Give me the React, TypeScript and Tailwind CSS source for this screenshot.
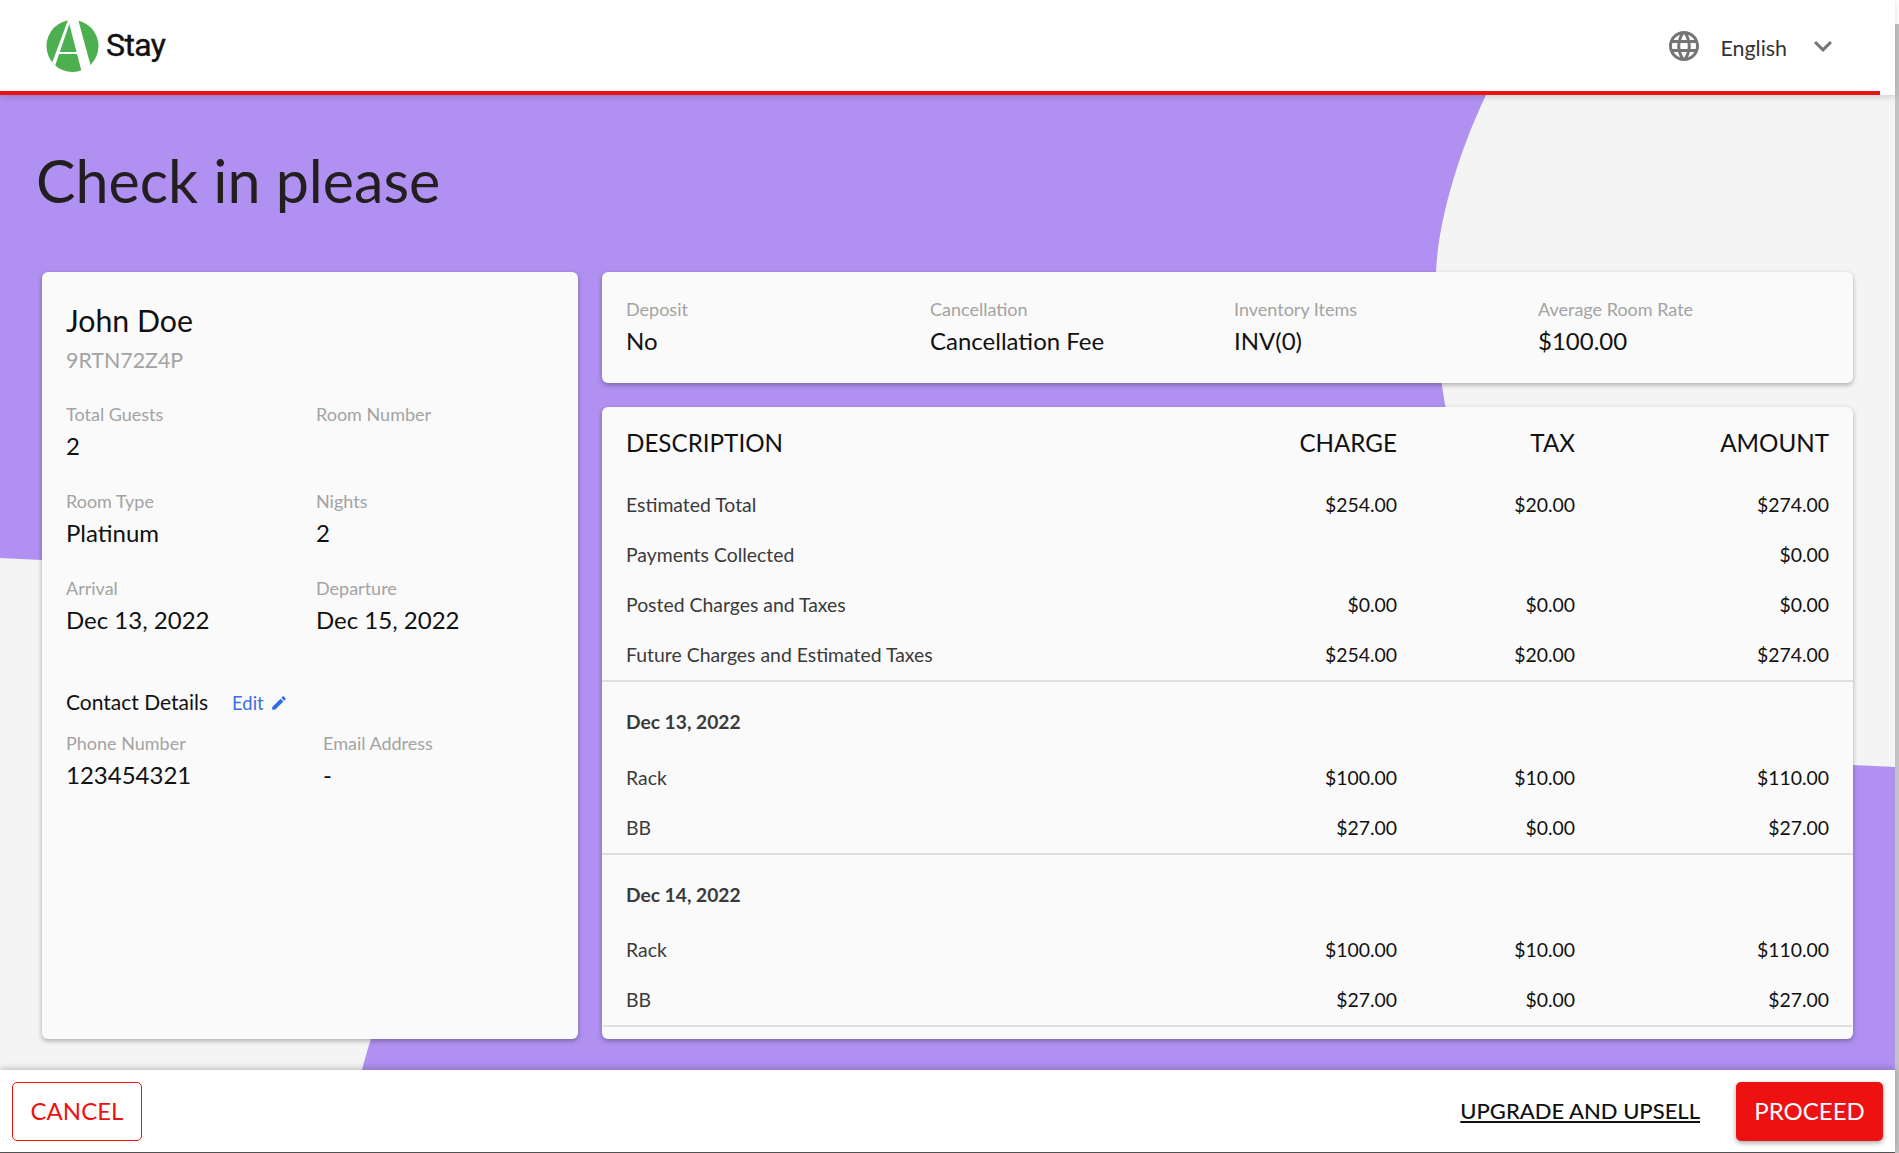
import React from "react";

const LANGUAGE =
  "M11.99 2C6.47 2 2 6.48 2 12s4.47 10 9.99 10C17.52 22 22 17.52 22 12S17.52 2 11.99 2zm6.93 6h-2.95c-.32-1.25-.78-2.45-1.38-3.56 1.84.63 3.37 1.91 4.33 3.56zM12 4.04c.83 1.2 1.48 2.53 1.91 3.96h-3.82c.43-1.43 1.08-2.76 1.91-3.96zM4.26 14C4.1 13.36 4 12.69 4 12s.1-1.36.26-2h3.38c-.08.66-.14 1.32-.14 2 0 .68.06 1.34.14 2H4.26zm.82 2h2.95c.32 1.25.78 2.45 1.38 3.56-1.84-.63-3.37-1.9-4.33-3.56zm2.95-8H5.08c.96-1.66 2.49-2.93 4.33-3.56C8.81 5.55 8.35 6.75 8.03 8zM12 19.96c-.83-1.2-1.48-2.53-1.91-3.96h3.82c-.43 1.43-1.08 2.76-1.91 3.96zM14.34 14H9.66c-.09-.66-.16-1.32-.16-2 0-.68.07-1.35.16-2h4.68c.09.65.16 1.32.16 2 0 .68-.07 1.34-.16 2zm.25 5.56c.6-1.11 1.06-2.31 1.38-3.56h2.95c-.96 1.65-2.49 2.93-4.33 3.56zM16.36 14c.08-.66.14-1.32.14-2 0-.68-.06-1.34-.14-2h3.38c.16.64.26 1.31.26 2s-.1 1.36-.26 2h-3.38z";

function Logo() {
  return (
    <svg width="54" height="54" viewBox="0 0 54 54" className="shrink-0">
      <circle cx="26.5" cy="27" r="26" fill="#4caf50" />
      <path d="M22 0 L32 0 L45 48 L36 54 Z" fill="#fff" />
      <path d="M22 1 L24 3 L9 47 L6 44 Z" fill="#fff" />
      <rect x="10" y="33" width="24" height="2" fill="#fff" />
    </svg>
  );
}

function Field({ label, value }: { label: string; value: string }) {
  return (
    <div>
      <div className="pt-px text-[18px] leading-[23px] text-[#a3a3a3]">{label}</div>
      <div className="mt-[4px] h-8 text-[24px] leading-8 text-[#111111]">{value}</div>
    </div>
  );
}

function Row({
  name,
  charge,
  tax,
  amount,
}: {
  name: string;
  charge?: string;
  tax?: string;
  amount: string;
}) {
  return (
    <div className="grid h-[50px] grid-cols-[1fr_150px_178px_254px] items-center px-6 text-[19.4px] leading-6 text-[#111111]">
      <div className="text-[#3a3a3a]">{name}</div>
      <div className="text-right">{charge}</div>
      <div className="text-right">{tax}</div>
      <div className="text-right">{amount}</div>
    </div>
  );
}

export default function App() {
  return (
    <div className="flex h-[1153px] w-full overflow-hidden bg-white font-['Lato','Liberation_Sans',sans-serif]">
      <div className="flex h-full w-[1895px] shrink-0 flex-col">
        <header className="relative z-20 h-[95px] shrink-0 bg-white shadow-[0_2px_6px_rgba(0,0,0,0.15)]">
          <div className="flex h-[95px] w-[1880px] items-center justify-between border-b-4 border-[#ee1111] pl-[46px] pr-[39px]">
            <div className="flex items-center gap-[6px]">
              <Logo />
              <span className="-mt-[2px] font-['Roboto',sans-serif] text-[32px] font-normal leading-none tracking-[-0.6px] text-[#111111] [-webkit-text-stroke:0.4px_#111111]">
                Stay
              </span>
            </div>
            <div className="flex items-center">
              <svg width="36" height="36" viewBox="0 0 24 24" fill="#757575">
                <path d={LANGUAGE} />
              </svg>
              <span className="ml-[19px] mt-[4px] text-[21.4px] leading-7 text-[#333333]">English</span>
              <svg width="36" height="36" viewBox="0 0 24 24" fill="#757575" className="ml-[18px]">
                <path d="M16.59 8.59L12 13.17 7.41 8.59 6 10l6 6 6-6z" />
              </svg>
            </div>
          </div>
        </header>

        <main className="relative min-h-0 flex-1 overflow-hidden bg-[#f4f4f4]">
          <svg className="absolute inset-0" width="1895" height="975" viewBox="0 95 1895 975" fill="#b090f0">
            <path d="M0 95 H1486 C1456 158 1438 225 1436 272 C1434 320 1438 365 1445.5 407 L1500 700 L1853 765 L1895 767 V1070 H362 C366 1055 368 1048 371 1039 L578 800 L42 560 L0 558 Z" />
          </svg>
          <div className="relative">
            <h1 className="ml-[36px] pb-[1px] pt-[50px] text-[59.2px] font-normal leading-[72px] text-[#231f20]">
              Check in please
            </h1>
            <div className="ml-[42px] mt-[54px] flex h-[767px] gap-6">
              <section className="w-[536px] rounded-md bg-[#fafafa] px-6 pt-[30px] shadow-[0_2px_5px_rgba(0,0,0,0.3)]">
                <div className="text-[30.3px] leading-9 text-[#111111]">John Doe</div>
                <div className="mt-[10px] text-[21.4px] leading-6 text-[#a3a3a3]">9RTN72Z4P</div>
                <div className="mt-[30px] grid grid-cols-[250px_1fr] gap-y-[27px]">
                  <Field label="Total Guests" value="2" />
                  <Field label="Room Number" value="" />
                  <Field label="Room Type" value="Platinum" />
                  <Field label="Nights" value="2" />
                  <Field label="Arrival" value="Dec 13, 2022" />
                  <Field label="Departure" value="Dec 15, 2022" />
                </div>
                <div className="mt-[52px] flex h-7 items-center">
                  <span className="text-[21px] leading-7 text-[#111111]">Contact Details</span>
                  <span className="ml-6 mt-px text-[18.4px] leading-7 text-[#3d6ee0]">Edit</span>
                  <svg width="18" height="18" viewBox="0 0 24 24" fill="#2f6be4" className="ml-[6px] mt-px">
                    <path d="M3 17.25V21h3.75L17.81 9.94l-3.75-3.75L3 17.25zM20.71 7.04c.39-.39.39-1.02 0-1.41l-2.34-2.34c-.39-.39-1.02-.39-1.41 0l-1.83 1.83 3.75 3.75 1.83-1.83z" />
                  </svg>
                </div>
                <div className="mt-[15px] grid grid-cols-[257px_1fr]">
                  <Field label="Phone Number" value="123454321" />
                  <Field label="Email Address" value="-" />
                </div>
              </section>

              <div className="flex w-[1251px] flex-col gap-6">
                <section className="grid h-[111px] grid-cols-[304px_304px_304px_1fr] rounded-md bg-[#fafafa] px-6 pt-[25px] shadow-[0_2px_5px_rgba(0,0,0,0.3)]">
                  <Field label="Deposit" value="No" />
                  <Field label="Cancellation" value="Cancellation Fee" />
                  <Field label="Inventory Items" value="INV(0)" />
                  <Field label="Average Room Rate" value="$100.00" />
                </section>

                <section className="flex-1 rounded-md bg-[#fafafa] pt-5 shadow-[0_2px_5px_rgba(0,0,0,0.3)]">
                  <div className="grid h-8 grid-cols-[1fr_150px_178px_254px] items-center px-6 text-[24.2px] leading-8 text-[#111111]">
                    <div>DESCRIPTION</div>
                    <div className="text-right">CHARGE</div>
                    <div className="text-right">TAX</div>
                    <div className="text-right">AMOUNT</div>
                  </div>
                  <div className="mt-[21px]">
                    <Row name="Estimated Total" charge="$254.00" tax="$20.00" amount="$274.00" />
                    <Row name="Payments Collected" amount="$0.00" />
                    <Row name="Posted Charges and Taxes" charge="$0.00" tax="$0.00" amount="$0.00" />
                    <Row name="Future Charges and Estimated Taxes" charge="$254.00" tax="$20.00" amount="$274.00" />
                  </div>
                  <div className="border-t-2 border-[#dedede] px-6 pb-[19px] pt-[28px] text-[19.2px] font-bold leading-6 text-[#3a3a3a]">
                    Dec 13, 2022
                  </div>
                  <Row name="Rack" charge="$100.00" tax="$10.00" amount="$110.00" />
                  <Row name="BB" charge="$27.00" tax="$0.00" amount="$27.00" />
                  <div className="border-t-2 border-[#dedede] px-6 pb-[18px] pt-[28px] text-[19.2px] font-bold leading-6 text-[#3a3a3a]">
                    Dec 14, 2022
                  </div>
                  <Row name="Rack" charge="$100.00" tax="$10.00" amount="$110.00" />
                  <Row name="BB" charge="$27.00" tax="$0.00" amount="$27.00" />
                  <div className="mx-px border-t-2 border-[#dedede]" />
                </section>
              </div>
            </div>
          </div>
        </main>

        <footer className="relative z-10 flex h-[82px] shrink-0 items-center justify-between bg-white pl-3 pr-3 shadow-[0_-2px_6px_rgba(0,0,0,0.2)]">
          <button className="h-[59px] w-[130px] rounded-[5px] border border-[#ee1111] text-[24px] leading-none text-[#ee1111]">
            CANCEL
          </button>
          <div className="flex items-center gap-[36px]">
            <span className="text-[22px] font-medium leading-7 text-[#111111] underline underline-offset-2">
              UPGRADE AND UPSELL
            </span>
            <button className="h-[59px] w-[147px] rounded-[5px] bg-[#ee1111] text-[24px] leading-none text-white shadow-[0_2px_5px_rgba(0,0,0,0.35)]">
              PROCEED
            </button>
          </div>
        </footer>
        <div className="h-px shrink-0 bg-[#555555]" />
      </div>
      <div className="flex h-full w-1 shrink-0 flex-col bg-white">
        <div className="mt-6 flex-1 bg-[#c2c2c2]" />
      </div>
    </div>
  );
}
